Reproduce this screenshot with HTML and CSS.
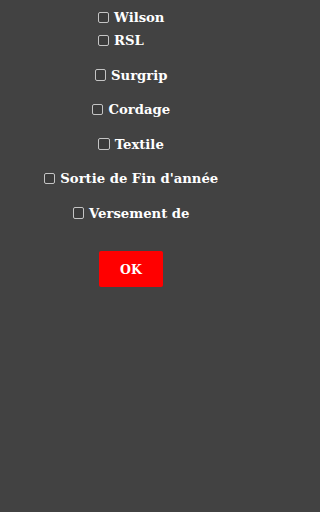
FILE: index.html
```html
<!DOCTYPE html>
<html lang="fr">
<head>
<meta charset="utf-8">
<title>Choix</title>
<link rel="stylesheet" href="styles.css">
</head>
<body>
<div class="list">
  <div class="group">
    <label class="row tight"><span class="box"></span>Wilson</label>
    <label class="row"><span class="box"></span>RSL</label>
  </div>
  <label class="row"><span class="box"></span>Surgrip</label>
  <label class="row"><span class="box"></span>Cordage</label>
  <label class="row"><span class="box"></span>Textile</label>
  <label class="row"><span class="box"></span>Sortie de Fin d'année</label>
  <label class="row"><span class="box"></span>Versement de</label>
  <button class="ok">OK</button>
</div>
</body>
</html>
```
FILE: styles.css
```css
html, body {
  margin: 0;
  background: #424242;
  height: 100%;
}
.list {
  width: 262px;
  display: flex;
  flex-direction: column;
  align-items: center;
  padding-top: 6px;
  font-family: "DejaVu Serif", serif;
  font-weight: bold;
  font-size: 13.2px;
  color: #ffffff;
}
.group {
  display: flex;
  flex-direction: column;
  align-items: flex-start;
}
.row {
  display: flex;
  align-items: center;
  height: 23px;
  margin-bottom: 11.5px;
}
.row.tight {
  margin-bottom: 0;
}
.box {
  width: 9.5px;
  height: 9.5px;
  border: 1.5px solid #c4c4c4;
  border-radius: 2px;
  background: #3b3b3b;
  margin-right: 5px;
}
.ok {
  margin-top: 15px;
  width: 64px;
  height: 36px;
  background: #ff0000;
  color: #ffffff;
  border: none;
  border-radius: 2px;
  font-family: "DejaVu Serif", serif;
  font-weight: bold;
  font-size: 12.5px;
}
```
